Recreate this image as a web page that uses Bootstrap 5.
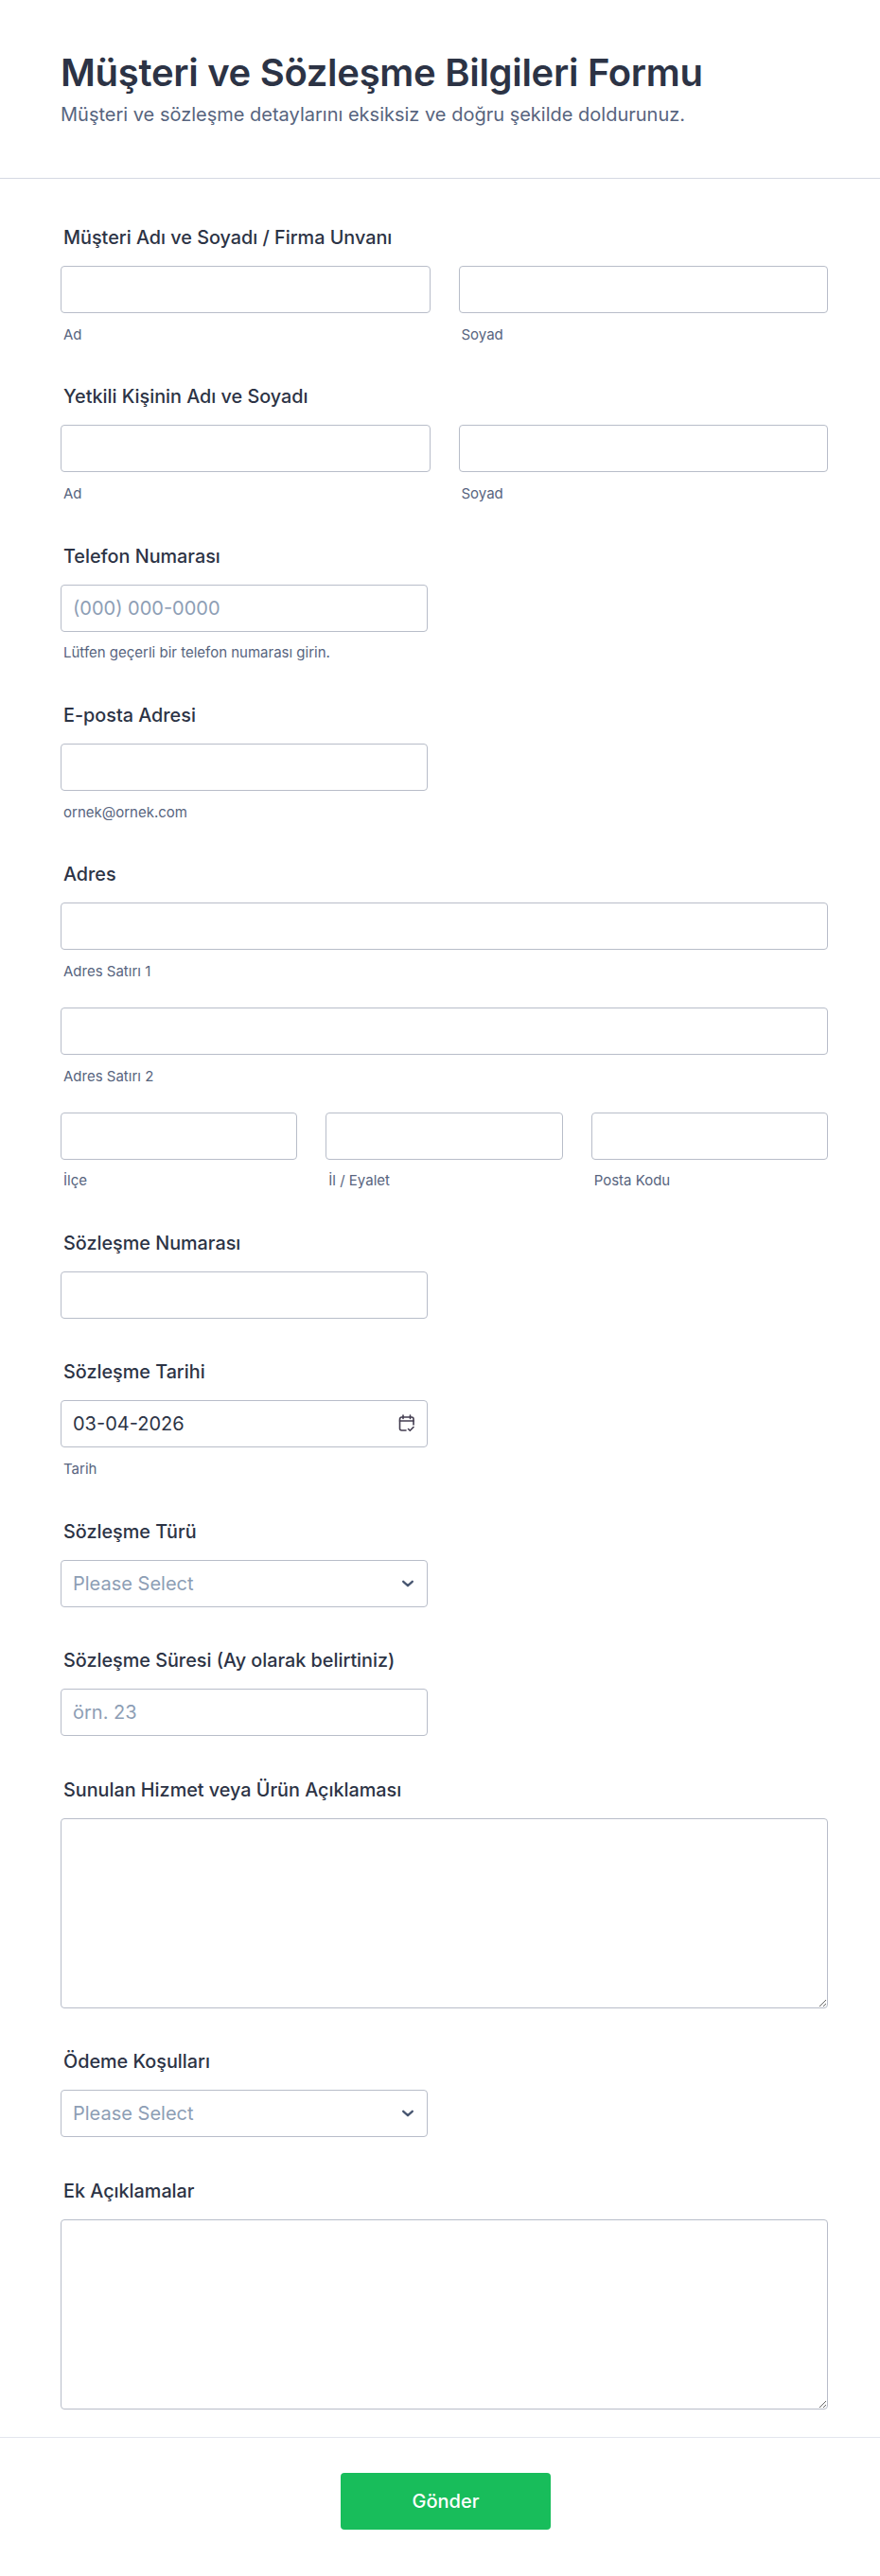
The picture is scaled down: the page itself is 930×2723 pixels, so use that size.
<!DOCTYPE html>
<html lang="tr">
<head>
<meta charset="utf-8">
<title>Müşteri ve Sözleşme Bilgileri Formu</title>
<link href="https://cdn.jsdelivr.net/npm/bootstrap@5.3.0/dist/css/bootstrap.min.css" rel="stylesheet">
<style>
body{font-family:Inter,"Liberation Sans",sans-serif;color:#2c3345;background:#fff}
.head-zone{padding:52px 64px 0;height:189px;border-bottom:1px solid #d5d8e3}
.head-title{font-size:40px;line-height:50px;font-weight:600;margin:0 0 7px;color:#2c3345;letter-spacing:-.3px}
.head-sub{font-size:20px;line-height:24px;color:#57647e;margin:0}
.form-zone{padding:50px 55px 0 64px}
.fld{margin-bottom:44.5px}
.fld-sm{margin-bottom:0}
.fld-label{display:block;font-size:19.8px;line-height:24px;font-weight:500;margin:0 0 18px 3px;color:#2c3345}
.fld-w{width:388px}
.fld-row{--bs-gutter-x:30px;--bs-gutter-y:0}
.form-control,.form-select{height:50px;border:1px solid #b8bdc9;border-radius:4px;font-size:20px;color:#2c3345;padding:0 12px;box-shadow:none}
.form-control::placeholder{color:#8d9eb5;opacity:1}
.form-select{color:#8d9eb5;background-image:url("data:image/svg+xml,%3csvg xmlns='http://www.w3.org/2000/svg' viewBox='0 0 16 16'%3e%3cpath fill='none' stroke='%23475570' stroke-width='2.6' stroke-linecap='round' stroke-linejoin='round' d='M2.5 5.5 8 10.5l5.5-5'/%3e%3c/svg%3e");background-size:14px 14px;background-position:right 13px center}
textarea.form-control{height:201px;padding:8px 12px}
.fld-help{font-size:15px;line-height:18px;color:#57647e;margin:13.75px 0 0 3px}
.addr-gap{margin-bottom:29px}
.date-box{position:relative}
.date-ico{position:absolute;right:13.5px;top:15px}
.foot-zone{border-top:1px solid #e3e5ee;margin-top:29px;padding:37px 0 0 12px;text-align:center;height:147px}
.send-btn{width:222px;height:60px;background:#18bd5b;border:0;border-radius:4px;color:#fff;font-size:20px;font-weight:500}
</style>
</head>
<body>
<div class="head-zone">
  <h1 class="head-title">Müşteri ve Sözleşme Bilgileri Formu</h1>
  <p class="head-sub">Müşteri ve sözleşme detaylarını eksiksiz ve doğru şekilde doldurunuz.</p>
</div>
<form class="form-zone">
  <div class="fld">
    <label class="fld-label">Müşteri Adı ve Soyadı / Firma Unvanı</label>
    <div class="row fld-row">
      <div class="col-6"><input class="form-control" type="text"><div class="fld-help">Ad</div></div>
      <div class="col-6"><input class="form-control" type="text"><div class="fld-help">Soyad</div></div>
    </div>
  </div>
  <div class="fld">
    <label class="fld-label">Yetkili Kişinin Adı ve Soyadı</label>
    <div class="row fld-row">
      <div class="col-6"><input class="form-control" type="text"><div class="fld-help">Ad</div></div>
      <div class="col-6"><input class="form-control" type="text"><div class="fld-help">Soyad</div></div>
    </div>
  </div>
  <div class="fld">
    <label class="fld-label">Telefon Numarası</label>
    <input class="form-control fld-w" type="text" placeholder="(000) 000-0000">
    <div class="fld-help">Lütfen geçerli bir telefon numarası girin.</div>
  </div>
  <div class="fld">
    <label class="fld-label">E-posta Adresi</label>
    <input class="form-control fld-w" type="text">
    <div class="fld-help">ornek@ornek.com</div>
  </div>
  <div class="fld">
    <label class="fld-label">Adres</label>
    <div class="addr-gap"><input class="form-control" type="text"><div class="fld-help">Adres Satırı 1</div></div>
    <div class="addr-gap"><input class="form-control" type="text"><div class="fld-help">Adres Satırı 2</div></div>
    <div class="row fld-row">
      <div class="col-4"><input class="form-control" type="text"><div class="fld-help">İlçe</div></div>
      <div class="col-4"><input class="form-control" type="text"><div class="fld-help">İl / Eyalet</div></div>
      <div class="col-4"><input class="form-control" type="text"><div class="fld-help">Posta Kodu</div></div>
    </div>
  </div>
  <div class="fld">
    <label class="fld-label">Sözleşme Numarası</label>
    <input class="form-control fld-w" type="text">
  </div>
  <div class="fld">
    <label class="fld-label">Sözleşme Tarihi</label>
    <div class="date-box fld-w">
      <input class="form-control" type="text" value="03-04-2026">
      <svg class="date-ico" width="18" height="19" viewBox="0 0 18 19" fill="none" stroke="#433d50" stroke-width="1.6" stroke-linecap="round" stroke-linejoin="round"><path d="M8 17H3.5a2 2 0 0 1-2-2V5a2 2 0 0 1 2-2h10.500a2 2 0 0 1 2 2v6"/><path d="M1.500 7h14.500M5 1v3.500M12.500 1v3.500M10.500 15.500l1.800 1.800 3.700-3.800"/></svg>
    </div>
    <div class="fld-help">Tarih</div>
  </div>
  <div class="fld">
    <label class="fld-label">Sözleşme Türü</label>
    <select class="form-select fld-w"><option>Please Select</option></select>
  </div>
  <div class="fld">
    <label class="fld-label">Sözleşme Süresi (Ay olarak belirtiniz)</label>
    <input class="form-control fld-w" type="text" placeholder="örn. 23">
  </div>
  <div class="fld">
    <label class="fld-label">Sunulan Hizmet veya Ürün Açıklaması</label>
    <textarea class="form-control"></textarea>
  </div>
  <div class="fld">
    <label class="fld-label">Ödeme Koşulları</label>
    <select class="form-select fld-w"><option>Please Select</option></select>
  </div>
  <div class="fld-sm">
    <label class="fld-label">Ek Açıklamalar</label>
    <textarea class="form-control"></textarea>
  </div>
</form>
<div class="foot-zone">
  <button class="btn send-btn" type="button">Gönder</button>
</div>
</body>
</html>
